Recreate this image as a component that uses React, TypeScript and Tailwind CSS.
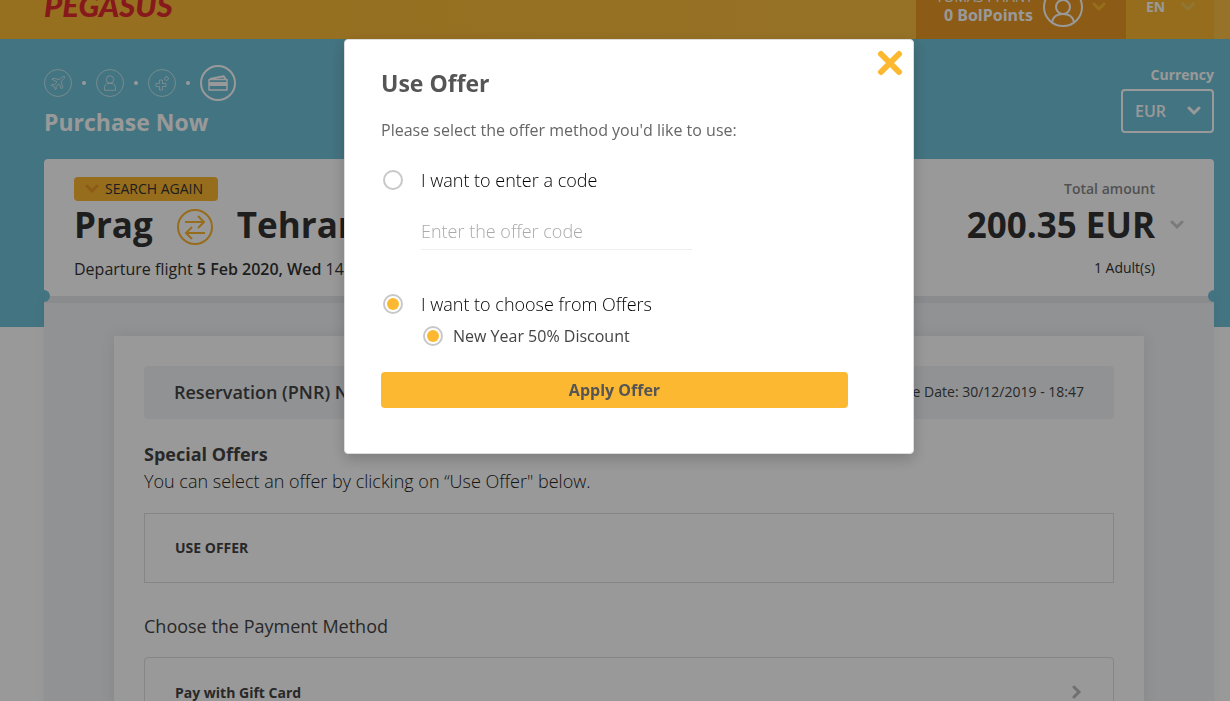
import { useState } from 'react'
import type { ReactNode } from 'react'

type ChevronProps = {
  className?: string
}

/** Thick rounded chevron pointing down, coloured through the text colour. */
function Chevron({ className = '' }: ChevronProps) {
  return (
    <svg viewBox="0 0 14 10" className={`h-[10px] w-[14px] ${className}`} fill="none" stroke="currentColor" strokeWidth="3" aria-hidden="true">
      <path d="M2 2l5 5 5-5" strokeLinecap="round" />
    </svg>
  )
}

function PlaneIcon() {
  return (
    <svg viewBox="0 0 16 16" className="size-4" fill="none" stroke="currentColor" strokeLinejoin="round" aria-hidden="true">
      <path d="M14.5 1.500c-1-.4-2 .1-2.800.900L9.500 4.600 3 3.200 2 4.200l5 2.900-2.600 2.600-2.300-.3-.9.9 2.900 1.400 1.400 2.900.9-.9-.3-2.300L8.700 8.800l2.900 5 1-1-1.400-6.500 2.200-2.200c.8-.8 1.400-1.900 1.100-2.600z" />
    </svg>
  )
}

function PassengerIcon() {
  return (
    <svg viewBox="0 0 16 16" className="size-4" fill="none" stroke="currentColor" aria-hidden="true">
      <circle cx="8" cy="4.500" r="3.700" />
      <path d="M2.500 15.300v-2.500c0-2.300 1.300-4 3.500-4.400h4c2.200.4 3.500 2.100 3.500 4.400v2.500z" strokeLinejoin="round" />
    </svg>
  )
}

function ExtrasIcon() {
  return (
    <svg viewBox="0 0 16 16" className="size-4" fill="none" stroke="currentColor" strokeLinejoin="round" aria-hidden="true">
      <path d="M5.500 5h3v3.500H12v3H8.500V15h-3v-3.500H2v-3h3.500z" />
      <path d="M12.500 1l1 1.500 1.500 1-1.500 1-1 1.500-1-1.500-1.500-1 1.500-1z" />
    </svg>
  )
}

function CardIcon() {
  return (
    <svg viewBox="0 0 20 16" className="h-4 w-5" fill="none" stroke="currentColor" strokeWidth="1.500" strokeLinejoin="round" aria-hidden="true">
      <path d="M1 4.500h18v10.500H1z" />
      <path d="M2 4L15.500 1.200 17.500 4" strokeWidth="2" />
      <path d="M1 9h18" strokeWidth="4" />
    </svg>
  )
}

function StepDot() {
  return <span className="size-1 rounded-full bg-white" />
}

function Step({ label, children }: { label: string; children: ReactNode }) {
  return (
    <li className="flex size-7 items-center justify-center rounded-full border border-white/60 text-white/60" aria-label={label}>
      {children}
    </li>
  )
}

function Header() {
  return (
    <header className="flex h-[39px] items-end justify-between overflow-hidden bg-gradient-to-r from-[#fab934] to-[#fac044] pr-4 pl-11">
      <a href="#" className="mb-[18px] font-[Lato] text-[31px] leading-8 font-black text-[#e12b30] italic">
        PEGASUS
      </a>

      <div className="flex h-20 shrink-0">
        <button className="flex w-[210px] items-end justify-end bg-[#e99823] pr-5 pb-3 text-white">
          <span className="mb-[2px] text-right">
            <span className="block text-[14px] leading-4">TOMAS PHANT</span>
            <span className="block text-[16px] leading-5 font-bold">0 BolPoints</span>
          </span>
          <svg viewBox="0 0 40 40" className="ml-[10px] size-10" fill="none" stroke="currentColor" strokeWidth="2" aria-hidden="true">
            <circle cx="20" cy="20" r="19" />
            <circle cx="20" cy="20" r="7" />
            <path d="M9 35c1-5 5-8 11-8s10 3 11 8" />
          </svg>
          <Chevron className="mb-[15px] ml-[9px] text-[#fbb930]" />
        </button>
        <button className="flex w-[88px] items-end gap-4 bg-[#fab630] pb-[22px] pl-5 text-[14px] font-bold text-white">
          EN
          <Chevron className="mb-[5px] text-[#f0c75a]" />
        </button>
      </div>
    </header>
  )
}

function ProgressBar() {
  return (
    <div className="flex h-[120px] justify-between">
      <div className="pt-[26px]">
        <ol className="flex items-center gap-[10px]">
          <Step label="Flight"><PlaneIcon /></Step>
          <StepDot />
          <Step label="Passenger"><PassengerIcon /></Step>
          <StepDot />
          <Step label="Extras"><ExtrasIcon /></Step>
          <StepDot />
          <li className="flex size-9 items-center justify-center rounded-full border-2 border-white" aria-label="Payment">
            <CardIcon />
          </li>
        </ol>
        <h1 className="mt-[3px] text-[23px] leading-9 font-bold">Purchase Now</h1>
      </div>

      <div className="flex flex-col items-end pt-[26px]">
        <label htmlFor="currency" className="text-[14px] leading-5 font-bold">Currency</label>
        <div className="relative mt-1">
          <select id="currency" className="h-11 w-[93px] appearance-none rounded border-2 border-white px-3 text-[16px] font-semibold">
            <option>EUR</option>
          </select>
          <Chevron className="pointer-events-none absolute top-[17px] right-[13px]" />
        </div>
      </div>
    </div>
  )
}

function FlightSummary() {
  return (
    <section className="relative flex h-[137px] justify-between rounded-t bg-white px-[30px] text-[#333]">
      <div className="pt-[18px]">
        <button className="flex h-6 items-center gap-[6px] rounded bg-[#fab630] pr-[15px] pl-[11px] text-[14px] font-medium">
          <Chevron className="text-[#e99823]" />
          <span className="pb-[2px]">SEARCH AGAIN</span>
        </button>
        <div className="flex items-center text-[35px] leading-[48px] font-bold">
          Prag
          <svg viewBox="0 0 36 36" className="mx-6 mt-1 size-9 text-[#fab630]" fill="none" stroke="currentColor" strokeWidth="2" aria-hidden="true">
            <circle cx="18" cy="18" r="17" />
            <path d="M8 13h19M21 7l6 6-6 6M28 24H9M15 18l-6 6 6 6" />
          </svg>
          Tehran
        </div>
        <p className="mt-2 text-[16px] leading-6">
          Departure flight <b className="font-semibold">5 Feb 2020, Wed</b> 14:25
        </p>
      </div>

      <div className="flex items-start gap-[15px] pt-5">
        <div className="text-right">
          <p className="text-[14px] leading-5 font-semibold text-[#888]">Total amount</p>
          <p className="mt-[2px] text-[35px] leading-[48px] font-bold">200.35 EUR</p>
          <p className="mt-[9px] text-[14px] leading-5">1 Adult(s)</p>
        </div>
        <Chevron className="mt-[41px] text-[#ccc]" />
      </div>

      {/* ticket notches */}
      <span className="absolute -bottom-[6px] left-0 z-10 h-3 w-[6px] rounded-r-full bg-[#71c1d7]" />
      <span className="absolute right-0 -bottom-[6px] z-10 h-3 w-[6px] rounded-l-full bg-[#71c1d7]" />
    </section>
  )
}

function PaymentPanel() {
  return (
    <section className="border-t-[7px] border-[#e5e8ec] bg-[#f1f3f6] px-[70px] pt-[33px] text-[#444] shadow-[0_0_10px_rgba(0,0,0,0.04)]">
      <div className="bg-white px-[30px] pt-[30px] pb-10 shadow-[0_0_14px_rgba(0,0,0,0.08)]">
        <div className="flex h-[53px] items-center justify-between rounded bg-[#f1f3f6] px-[30px]">
          <p className="text-[18px] font-semibold">Reservation (PNR) No</p>
          <p className="pb-[3px] text-[14px]"><b className="font-medium">Due Date:</b> 30/12/2019 - 18:47</p>
        </div>

        <h2 className="mt-[22px] text-[18px] leading-[27px] font-bold">Special Offers</h2>
        <p className="text-[18px] leading-[27px] font-light text-[#222]">You can select an offer by clicking on “Use Offer" below.</p>
        <button className="mt-[18px] flex h-[70px] w-full items-center border border-[#dfdfdf] px-[30px] pb-[2px] text-[14px] font-bold">
          USE OFFER
        </button>

        <h2 className="mt-[30px] text-[18px] leading-[27px] font-medium">Choose the Payment Method</h2>
        <button className="mt-[17px] flex h-[72px] w-full items-center justify-between rounded border border-[#dfdfdf] px-[29px] pb-[2px] pl-[30px] text-[14px] font-bold">
          Pay with Gift Card
          <Chevron className="-rotate-90 text-[#bbb]" />
        </button>
      </div>
    </section>
  )
}

type RadioProps = {
  name: string
  label: string
  checked: boolean
  onChange: () => void
  small?: boolean
}

function Radio({ name, label, checked, onChange, small }: RadioProps) {
  return (
    <label className={small ? 'flex items-center gap-[10px] text-[16px] leading-6' : 'flex items-center gap-[18px] text-[18px] leading-7 font-light text-black'}>
      <input
        type="radio"
        name={name}
        checked={checked}
        onChange={onChange}
        className="flex size-5 shrink-0 appearance-none items-center justify-center rounded-full border-2 border-[#c8c8c8] before:size-3 before:rounded-full checked:before:bg-[#fcb831]"
      />
      {label}
    </label>
  )
}

/**
 * OfferModal lets the user type an offer code or pick one of the available offers.
 */
function OfferModal() {
  const [method, setMethod] = useState('offers')
  const [code, setCode] = useState('')

  return (
    <div className="fixed inset-0 z-50 flex items-start justify-center bg-black/40 pt-[39px] pl-7">
      <div role="dialog" aria-labelledby="offer-title" className="relative w-full max-w-[570px] rounded border border-[#ddd] bg-white px-9 pt-[27px] pb-[45px] text-[#444] shadow-[0_5px_15px_rgba(0,0,0,0.2)]">
        <button aria-label="Close" className="absolute top-[10px] right-[10px] text-[#fcb831]">
          <svg viewBox="0 0 26 26" className="size-[26px]" stroke="currentColor" strokeWidth="6" strokeLinecap="round" aria-hidden="true">
            <path d="M4 4l18 18M22 4L4 22" />
          </svg>
        </button>

        <h2 id="offer-title" className="text-[23px] leading-8 font-bold text-[#555]">Use Offer</h2>
        <p className="mt-[19px] text-[16px] leading-6 text-[#666]">Please select the offer method you'd like to use:</p>

        <div className="mt-6 pl-[2px]">
          <Radio name="method" label="I want to enter a code" checked={method === 'code'} onChange={() => setMethod('code')} />
          <input
            type="text"
            aria-label="Offer code"
            placeholder="Enter the offer code"
            value={code}
            onChange={(e) => setCode(e.target.value)}
            className="mt-[19px] ml-[38px] block h-[37px] w-[271px] border-b border-[#eee] text-[18px] font-light outline-none placeholder:text-[#aaa]"
          />
        </div>

        <div className="mt-10 pl-[2px]">
          <Radio name="method" label="I want to choose from Offers" checked={method === 'offers'} onChange={() => setMethod('offers')} />
          <div className="mt-[6px] ml-10">
            <Radio small name="offer" label="New Year 50% Discount" checked={method === 'offers'} onChange={() => setMethod('offers')} />
          </div>
        </div>

        <button className="mt-6 mr-[29px] flex h-9 w-[467px] items-center justify-center rounded bg-[#fcb831] text-[16px] font-bold text-[#555]">
          Apply Offer
        </button>
      </div>
    </div>
  )
}

export default function App() {
  return (
    <div className="h-screen overflow-hidden bg-white font-['Open_Sans',sans-serif]">
      <Header />
      <main className="bg-linear-[#71c1d7_288px,#fff_288px] pr-4 pl-11 text-white">
        <ProgressBar />
        <FlightSummary />
        <PaymentPanel />
      </main>
      <OfferModal />
    </div>
  )
}
